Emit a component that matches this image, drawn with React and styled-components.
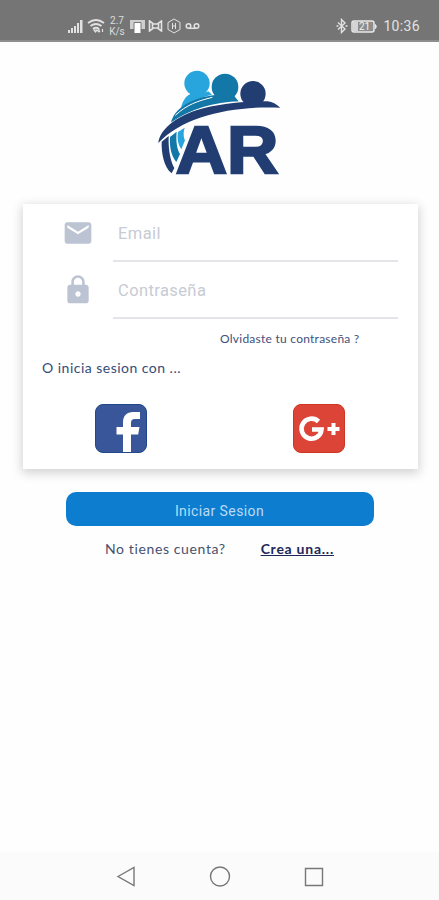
import styled, { createGlobalStyle } from 'styled-components';
import { MdEmail, MdLock } from 'react-icons/md';

const GlobalStyle = createGlobalStyle`
  * {
    box-sizing: border-box;
  }

  body {
    margin: 0;
    background: #fefefe;
    font-family: Lato, "Liberation Sans", sans-serif;
  }
`;

const Screen = styled.div`
  width: 439px;
  height: 900px;
  display: flex;
  flex-direction: column;
  overflow: hidden;
`;

const StatusBar = styled.header`
  height: 42px;
  flex: none;
  display: flex;
  justify-content: space-between;
  padding: 14px 19px 0 67px;
  background: #757575;
  border-bottom: 2px solid #8d8d8d;
  color: #e2e2e2;
`;

const StatusGroup = styled.div`
  display: flex;
  height: 24px;
  align-items: center;
  gap: ${({ $gap }) => $gap}px;
`;

const NetSpeed = styled.div`
  width: 16px;
  margin: 0 2px 0 1px;
  font: 10px/11px Roboto, sans-serif;
  text-align: center;
  color: #dcdcdc;
`;

const Clock = styled.span`
  margin-left: 2px;
  font: 14px/24px Roboto, sans-serif;
  letter-spacing: 0.35px;
`;

const Main = styled.main`
  flex: 1;
  display: flex;
  flex-direction: column;
  align-items: center;
`;

const LogoWrap = styled.div`
  width: 439px;
  height: 162px;
  padding: 18px 0 0 145px;
`;

const Card = styled.section`
  width: 395px;
  height: 265px;
  margin-left: 2px;
  padding-left: 19px;
  background: #fff;
  box-shadow: 0 3px 10px 1px rgba(0, 0, 0, 0.18);
`;

const Field = styled.label`
  height: ${({ $height }) => $height}px;
  display: flex;
  align-items: flex-end;
  color: #bcc3d2;

  svg {
    flex: none;
    margin: 0 19px 13px 20px;
  }
`;

const Input = styled.input`
  width: 285px;
  height: 46px;
  padding: 0 0 10px 5px;
  border: 0;
  border-bottom: 2px solid #e3e5e8;
  background: transparent;
  outline: none;
  font: 16.5px Roboto, sans-serif;
  letter-spacing: 0.4px;

  &::placeholder {
    color: #c7cbd3;
    opacity: 1;
  }
`;

const Forgot = styled.a`
  display: block;
  margin: 11px 0 0 178px;
  font-size: 12px;
  line-height: 18px;
  letter-spacing: 0.25px;
  color: #41507c;
`;

const SocialLabel = styled.p`
  margin: 11px 0 0;
  font-size: 14px;
  line-height: 18px;
  letter-spacing: 0.48px;
  color: #354b78;
`;

const SocialRow = styled.div`
  display: flex;
  gap: 146px;
  padding: 27px 0 0 53px;
`;

const SocialButton = styled.button`
  width: 52px;
  height: 49px;
  padding: 0;
  border: 1px solid ${({ $edge }) => $edge};
  border-radius: 8px;
  background: ${({ $color }) => $color};
  overflow: hidden;

  svg {
    display: block;
  }
`;

const LoginButton = styled.button`
  width: 308px;
  height: 34px;
  margin-top: 23px;
  padding: 3px 0 0;
  border: 0;
  border-radius: 10px;
  background: #0d7dd0;
  color: #b9dcf5;
  font: 14px Roboto, sans-serif;
  letter-spacing: 0.4px;
`;

const SignUp = styled.div`
  width: 229px;
  display: flex;
  justify-content: space-between;
  margin-top: 13px;
  font-size: 14px;
  line-height: 20px;
  letter-spacing: 0.62px;
  color: #46506f;
`;

const SignUpLink = styled.a`
  font-weight: 700;
  font-size: 14px;
  letter-spacing: 0.75px;
  color: #1d2758;
  text-decoration: underline;
`;

const NavBar = styled.nav`
  height: 48px;
  flex: none;
  display: flex;
  align-items: center;
  justify-content: center;
  gap: 70px;
  background: #fbfbfb;
`;

const Logo = () => (
  <svg width="150" height="140" viewBox="0 0 450 420">
    <circle cx="156" cy="70" r="38" fill="#28a5dc" />
    <path d="M108 144C115 116 125 108 140 100Q165 108 190 94L201 104C168 112 140 124 108 144Z" fill="#28a5dc" />
    <circle cx="240" cy="81" r="40" fill="#1378a8" />
    <path d="M78 190C85 145 145 111 211 105L240 117L268 108L283 127C200 129 134 151 78 190Z" fill="#1378a8" />
    <circle cx="324" cy="101" r="42" fill="#fff" />
    <circle cx="324" cy="101" r="38" fill="#213d72" />
    <path d="M78 190C134 151 200 128 286 126" fill="none" stroke="#fff" strokeWidth="4" />
    <path d="M91 166C125 134 158 123 202 112" fill="none" stroke="#fff" strokeWidth="3" />
    <path d="M40 249C45 207 94 171 154 151C220 130 300 124 368 124C382 126 394 132 406 143C270 137 117 166 40 249Z" fill="#213d72" />
    <path d="M50 245L71 228C69 270 78 309 88 324L80 340C56 321 49 278 50 245Z" fill="#213d72" />
    <path d="M75 231L95 215C92 246 97 270 105 282L94 306C78 288 73 258 75 231Z" fill="#1378a8" />
    <path d="M99 216L119 203C114 219 116 233 120 241L109 268C98 253 96 232 99 216Z" fill="#28a5dc" />
    <text
      x="92"
      y="339"
      fontFamily="Liberation Sans"
      fontWeight="700"
      fontSize="198"
      textLength="308"
      lengthAdjust="spacingAndGlyphs"
      fill="#213d72"
      stroke="#213d72"
      strokeWidth="7"
    >
      AR
    </text>
  </svg>
);

const SignalIcon = () => (
  <svg width="17" height="15" viewBox="0 0 17 15" fill="currentColor">
    <path d="M1 11h2v3H1zM4 9h2v5H4zM7 7h2v7H7zM10 4h2v10h-2zM13 1h2.5v13H13z" />
  </svg>
);

const WifiIcon = () => (
  <svg width="18" height="16" viewBox="0 0 18 16" fill="none" stroke="currentColor" strokeWidth="1.8">
    <path d="M1 5Q9-1 17 5M3.5 8Q9 4 14.5 8M6 11Q9 8.5 12 11" />
    <path d="M7 12h3l-1.500 2zM12 11v3M10.500 12.500l1.500 1.500 1-1M15.500 14v-3" strokeWidth="1.2" />
  </svg>
);

const ScreenIcon = () => (
  <svg width="15" height="15" viewBox="0 0 15 15">
    <path d="M0 1h15v9H0z" fill="#cfcfcf" />
    <path d="M4 3.500h7V14.500H4z" fill="#fff" stroke="#777" />
  </svg>
);

const BowIcon = () => (
  <svg width="15" height="12" viewBox="0 0 14 12" fill="none" stroke="currentColor" strokeWidth="1.6">
    <path d="M1 1l4 3h4l4-3v10l-4-3H5l-4 3zM4 4v4M10 4v4" />
  </svg>
);

const HexIcon = () => (
  <svg width="16" height="16" viewBox="0 0 14 16" fill="none" stroke="currentColor" strokeWidth="1">
    <path d="M7 1l6 3.500v7L7 15l-6-3.500v-7zM5.500 5v6M8.500 5v6M5.500 8h3" />
  </svg>
);

const VoicemailIcon = () => (
  <svg width="15" height="8" viewBox="0 0 15 8" fill="none" stroke="currentColor" strokeWidth="1.5">
    <circle cx="3.500" cy="4" r="2.300" />
    <circle cx="11.500" cy="4" r="2.300" />
    <path d="M3.500 6.300h8" />
  </svg>
);

const BluetoothIcon = () => (
  <svg width="12" height="16" viewBox="0 0 12 16" fill="none" stroke="currentColor" strokeWidth="1.4">
    <path d="M2 4.500l7 6.500-3.500 3.500v-13L9 5l-7 6.500M.5 8h2M9.500 8h2" />
  </svg>
);

const BatteryIcon = () => (
  <svg width="27" height="13" viewBox="0 0 27 13">
    <rect x="1" y="1" width="22" height="11" rx="2" fill="#8d8d8d" stroke="#e8e8e8" strokeWidth="1.500" />
    <rect x="2" y="2" width="5" height="9" fill="#d4d4d4" />
    <path d="M24.500 4.500q1.500 2 0 4z" fill="#e8e8e8" stroke="#e8e8e8" />
    <text x="8" y="10.300" fontFamily="Roboto" fontSize="10" fill="#f2f2f2">21</text>
  </svg>
);

const FacebookIcon = () => (
  <svg width="50" height="48" viewBox="0 0 50 48" fill="#fff">
    <path d="M27 49V29.500h-6.500V22H27v-4.500C27 10.500 31 7 37 7h7v7h-5c-3 0-4 1.400-4 4v4h8.500l-1.300 7.500H35V49z" />
  </svg>
);

const GooglePlusIcon = () => (
  <svg width="50" height="48" viewBox="0 0 50 48" fill="none" stroke="#fff">
    <path d="M24.500 16.500A10 10 0 1 0 27.500 24.500H18" strokeWidth="4.600" />
    <path d="M39.500 18v12M33.500 24h12" strokeWidth="4" />
  </svg>
);

const fields = [
  { type: 'email', placeholder: 'Email', icon: MdEmail, height: 58 },
  { type: 'password', placeholder: 'Contraseña', icon: MdLock, height: 57 },
];

const App = () => (
  <Screen>
    <GlobalStyle />
    <StatusBar>
      <StatusGroup $gap={3}>
        <SignalIcon />
        <WifiIcon />
        <NetSpeed>
          2.7
          <br />
          K/s
        </NetSpeed>
        <ScreenIcon />
        <BowIcon />
        <HexIcon />
        <VoicemailIcon />
      </StatusGroup>
      <StatusGroup $gap={3}>
        <BluetoothIcon />
        <BatteryIcon />
        <Clock>10:36</Clock>
      </StatusGroup>
    </StatusBar>

    <Main>
      <LogoWrap>
        <Logo />
      </LogoWrap>

      <Card>
        {fields.map(({ type, placeholder, icon: Icon, height }) => (
          <Field key={type} $height={height}>
            <Icon size={32} />
            <Input type={type} placeholder={placeholder} />
          </Field>
        ))}
        <Forgot>Olvidaste tu contraseña ?</Forgot>
        <SocialLabel>O inicia sesion con ...</SocialLabel>
        <SocialRow>
          <SocialButton $color="#39569b" $edge="#214789" aria-label="Facebook">
            <FacebookIcon />
          </SocialButton>
          <SocialButton $color="#db4437" $edge="#cf3520" aria-label="Google Plus">
            <GooglePlusIcon />
          </SocialButton>
        </SocialRow>
      </Card>

      <LoginButton>Iniciar Sesion</LoginButton>
      <SignUp>
        <span>No tienes cuenta?</span>
        <SignUpLink>Crea una...</SignUpLink>
      </SignUp>
    </Main>

    <NavBar>
      <svg width="24" height="24" viewBox="0 0 24 24" fill="none" stroke="#777" strokeWidth="1.400">
        <path d="M4 12.500L20 3.500v18z" />
      </svg>
      <svg width="24" height="24" viewBox="0 0 24 24" fill="none" stroke="#777" strokeWidth="1.400">
        <circle cx="12" cy="12.500" r="9.500" />
      </svg>
      <svg width="24" height="24" viewBox="0 0 24 24" fill="none" stroke="#777" strokeWidth="1.400">
        <path d="M3.500 4.500h17v17h-17z" />
      </svg>
    </NavBar>
  </Screen>
);

export default App;
